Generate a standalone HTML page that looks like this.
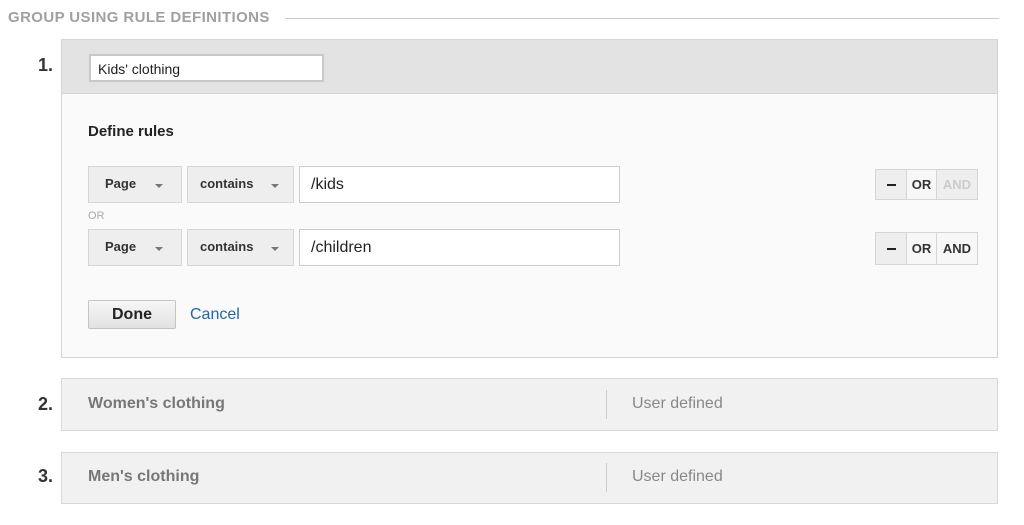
<!DOCTYPE html>
<html><head><style>
body{margin:0;width:1024px;height:525px;background:#fff;font-family:"Liberation Sans",sans-serif;position:relative;overflow:hidden}
.a{position:absolute}
.btn{position:absolute;background:#eee;border:1px solid #d6d6d6;box-sizing:border-box;font-weight:bold;font-size:13px;color:#333}
.caret{position:absolute;width:0;height:0;border-left:4px solid transparent;border-right:4px solid transparent;border-top:4px solid #777}
.inp{position:absolute;background:#fff;border:1px solid #ccc;box-sizing:border-box;font-size:16px;color:#222}
.seg{position:absolute;top:0;height:100%;box-sizing:border-box;border-right:1px solid #d6d6d6;font-weight:bold;font-size:13px;display:flex;align-items:center;justify-content:center}
.dash{width:9px;height:2px;background:#222}
.num{position:absolute;left:38px;font-weight:bold;font-size:18px;color:#333}
.box{position:absolute;left:61px;width:937px;background:#f1f1f1;border:1px solid #d8d8d8;box-sizing:border-box}
</style></head><body>
<div class="a" style="left:8px;top:9px;font-size:15px;letter-spacing:0.4px;font-weight:bold;color:#a0a0a0">GROUP USING RULE DEFINITIONS</div>
<div class="a" style="left:285px;top:18px;width:714px;height:1px;background:#ccc"></div>

<div class="num" style="top:55px">1.</div>
<div class="a" style="left:61px;top:39px;width:937px;height:319px;border:1px solid #d4d4d4;box-sizing:border-box;background:#fafafa"></div>
<div class="a" style="left:62px;top:40px;width:935px;height:53px;background:#e3e3e3;border-bottom:1px solid #d4d4d4"></div>
<div class="inp" style="left:89px;top:54px;width:235px;height:28px;border:2px solid #c8c8c8;font-size:14px;padding:5px 0 0 7px">Kids' clothing</div>
<div class="a" style="left:88px;top:123px;font-size:15px;font-weight:bold;color:#222">Define rules</div>

<div class="btn" style="left:88px;top:166px;width:94px;height:37px;padding:9px 0 0 16px">Page</div>
<div class="caret" style="left:155px;top:184px"></div>
<div class="btn" style="left:187px;top:166px;width:107px;height:37px;padding:9px 0 0 12px">contains</div>
<div class="caret" style="left:271px;top:184px"></div>
<div class="inp" style="left:299px;top:166px;width:321px;height:37px;padding:9px 0 0 11px">/kids</div>
<div class="a" style="left:88px;top:210px;font-size:11px;color:#aaa">OR</div>

<div class="btn" style="left:88px;top:229px;width:94px;height:37px;padding:9px 0 0 16px">Page</div>
<div class="caret" style="left:155px;top:247px"></div>
<div class="btn" style="left:187px;top:229px;width:107px;height:37px;padding:9px 0 0 12px">contains</div>
<div class="caret" style="left:271px;top:247px"></div>
<div class="inp" style="left:299px;top:229px;width:321px;height:37px;padding:9px 0 0 11px">/children</div>

<div class="a" style="left:875px;top:169px;width:103px;height:31px;border:1px solid #d6d6d6;box-sizing:border-box;background:#f7f7f7">
<div class="seg" style="left:0;width:31px;background:#eee"><div class="dash"></div></div>
<div class="seg" style="left:31px;width:30px;color:#333">OR</div>
<div class="seg" style="left:61px;width:40px;border:none;background:#eee;color:#ccc">AND</div></div>
<div class="a" style="left:875px;top:232px;width:103px;height:33px;border:1px solid #d6d6d6;box-sizing:border-box;background:#f7f7f7">
<div class="seg" style="left:0;width:31px;background:#eee"><div class="dash"></div></div>
<div class="seg" style="left:31px;width:30px;color:#333">OR</div>
<div class="seg" style="left:61px;width:40px;border:none;color:#333">AND</div></div>

<div class="a" style="left:88px;top:300px;width:88px;height:29px;border:1px solid #c4c4c4;border-radius:2px;box-sizing:border-box;background:linear-gradient(#f6f6f6,#e2e2e2);font-weight:bold;font-size:16px;color:#222;text-align:center;line-height:27px">Done</div>
<div class="a" style="left:190px;top:306px;font-size:16px;color:#1e66ad">Cancel</div>

<div class="num" style="top:394px">2.</div>
<div class="box" style="top:378px;height:53px"></div>
<div class="a" style="left:88px;top:395px;font-size:16px;font-weight:bold;color:#777">Women's clothing</div>
<div class="a" style="left:606px;top:390px;width:1px;height:29px;background:#ccc"></div>
<div class="a" style="left:632px;top:395px;font-size:16px;color:#888">User defined</div>

<div class="num" style="top:466px">3.</div>
<div class="box" style="top:452px;height:52px"></div>
<div class="a" style="left:88px;top:468px;font-size:16px;font-weight:bold;color:#777">Men's clothing</div>
<div class="a" style="left:606px;top:463px;width:1px;height:29px;background:#ccc"></div>
<div class="a" style="left:632px;top:468px;font-size:16px;color:#888">User defined</div>
</body></html>
